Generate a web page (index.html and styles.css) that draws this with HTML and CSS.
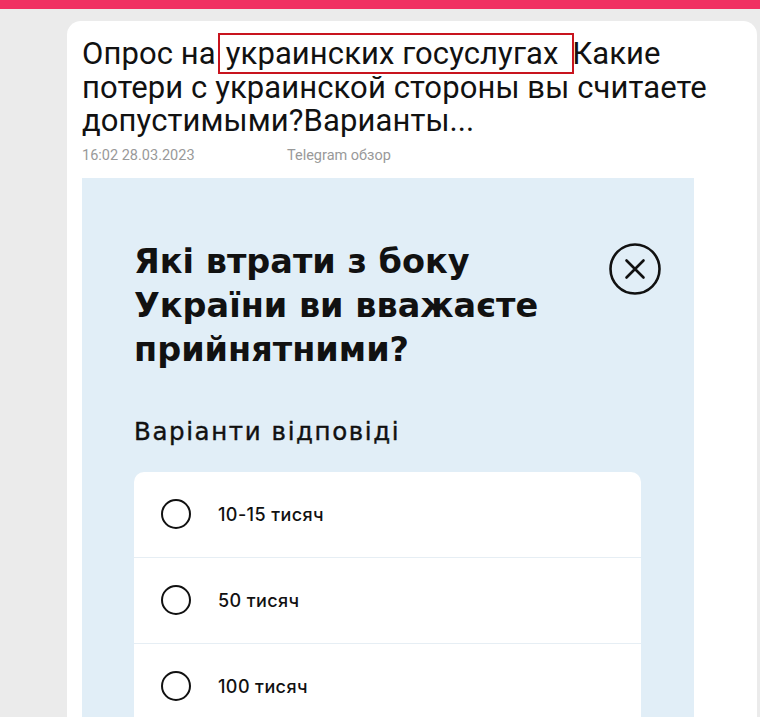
FILE: index.html
```html
<!DOCTYPE html>
<html lang="ru">
<head>
<meta charset="utf-8">
<link rel="stylesheet" href="styles.css">
</head>
<body>
<div class="topbar"></div>
<main class="page">
  <article class="card">
    <h1 class="title"><span>Опрос на</span><span class="hl">украинских госуслугах </span><span>Какие</span> <span>потери с украинской стороны вы считаете допустимыми?Варианты...</span></h1>
    <div class="meta"><span class="time">16:02 28.03.2023</span><span class="src">Telegram обзор</span></div>
    <div class="shot">
      <div class="shot-head">
        <h2 class="q">Які втрати з боку України ви вважаєте прийнятними?</h2>
        <svg class="close" width="54" height="54" viewBox="0 0 54 54"><circle cx="27" cy="27" r="24.5" fill="none" stroke="#111" stroke-width="2.6"/><path d="M18.5 18.5 L35.5 35.5 M35.5 18.5 L18.5 35.5" stroke="#111" stroke-width="2.6" stroke-linecap="round"/></svg>
      </div>
      <div class="sub">Варіанти відповіді</div>
      <div class="opts">
        <div class="opt"><span class="radio"></span><span class="lbl">10-15 тисяч</span></div>
        <div class="opt"><span class="radio"></span><span class="lbl">50 тисяч</span></div>
        <div class="opt"><span class="radio"></span><span class="lbl">100 тисяч</span></div>
      </div>
    </div>
  </article>
</main>
</body>
</html>
```
FILE: styles.css
```css
html, body { margin: 0; padding: 0; }
body { background: #ebebeb; font-family: Roboto, "Liberation Sans", sans-serif; overflow: hidden; height: 717px; }
.topbar { height: 9px; background: #f03062; }
.page { padding: 12px 3px 0 67px; }
.card { background: #fff; border-radius: 14px 14px 0 0; padding: 16px 15px 0 15px; height: 700px; box-sizing: border-box; }
.title { margin: 0; font-weight: 400; font-size: 31px; line-height: 33.5px; color: #111; letter-spacing: 0.1px; }
.hl { outline: 2.5px solid #c8141e; outline-offset: 0; padding: 0 6px 0 6px; margin-left: 4px; }
.meta { margin-top: 9px; font-size: 14.5px; color: #999; display: flex; height: 17px; line-height: 17px; }
.time { width: 205px; }
.shot { margin-top: 14px; width: 612px; background: #e1eef7; padding: 62px 53px 0 52px; box-sizing: border-box; height: 560px; }
.shot-head { display: flex; justify-content: space-between; align-items: flex-start; }
.q { margin: 0; font-family: "DejaVu Sans", sans-serif; font-weight: 700; font-size: 33.5px; line-height: 44px; color: #111; width: 420px; letter-spacing: 0; }
.close { margin-top: 2px; margin-right: -21px; }
.sub { margin-top: 45px; font-family: "DejaVu Sans", sans-serif; font-weight: 400; font-size: 24.5px; color: #111; letter-spacing: 1.6px; -webkit-text-stroke: 0.4px #111; }
.opts { margin-top: 26px; background: #fff; border-radius: 10px; width: 507px; }
.opt { height: 85px; display: flex; align-items: center; padding-left: 27px; border-bottom: 1.5px solid #e6eef4; }
.radio { width: 26px; height: 26px; border: 2.8px solid #111; border-radius: 50%; }
.lbl { margin-left: 27px; font-family: Inter, sans-serif; font-weight: 500; font-size: 18px; color: #111; letter-spacing: 0.4px; }
```
